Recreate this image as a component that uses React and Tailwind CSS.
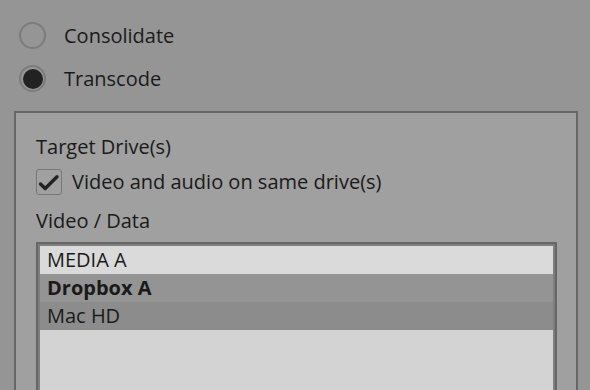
export default function App() {
  return (
    <div
      className="w-[590px] h-[390px] overflow-hidden bg-[#959595] text-[#1a1a1a]"
      style={{ fontFamily: '"Open Sans", "Noto Sans", sans-serif' }}
    >
      <div className="flex flex-col gap-[16px] pt-[22px] pl-[19px]">
        <div className="flex items-center gap-[18px] h-[27px]">
          <div className="w-[27px] h-[27px] rounded-full border-2 border-[#7c7c7c]" />
          <span className="text-[20px] leading-[27px]">Consolidate</span>
        </div>
        <div className="flex items-center gap-[18px] h-[27px]">
          <div className="w-[27px] h-[27px] rounded-full border-2 border-[#7c7c7c] flex items-center justify-center">
            <div className="w-[20px] h-[20px] rounded-full bg-[#222222]" />
          </div>
          <span className="text-[20px] leading-[27px]">Transcode</span>
        </div>
      </div>
      <div className="ml-[14px] mt-[19px] w-[564px] h-[300px] border-2 border-[#666666] bg-[#a0a0a0] pl-[20px] pt-[22px]">
        <div className="text-[20px] leading-[24px]">Target Drive(s)</div>
        <div className="mt-[10px] flex items-center gap-[10px] h-[26px]">
          <div className="w-[26px] h-[26px] rounded-[3px] border-[1.5px] border-[#777777] flex items-center justify-center">
            <svg width="23" height="23" viewBox="0 0 23 23">
              <path d="M2.5 13 L7.2 17.5 L19 5.8" fill="none" stroke="#222222" strokeWidth="3.4" strokeLinecap="round" strokeLinejoin="round" />
            </svg>
          </div>
          <span className="text-[20px] leading-[26px]">Video and audio on same drive(s)</span>
        </div>
        <div className="mt-[14px] text-[20px] leading-[24px]">Video / Data</div>
        <div className="mt-[9px] w-[521px] h-[200px] border-2 border-[#666666]">
          <div className="h-full border-2 border-[#7e7e7e] bg-[#d3d3d3] text-[20px]">
            <div className="h-[28px] bg-[#dadada] pl-[7px] leading-[27px]">MEDIA A</div>
            <div className="h-[28px] bg-[#949494] pl-[7px] leading-[27px] font-bold">Dropbox A</div>
            <div className="h-[28px] bg-[#8c8c8c] pl-[7px] leading-[27px]">Mac HD</div>
          </div>
        </div>
      </div>
    </div>
  );
}
